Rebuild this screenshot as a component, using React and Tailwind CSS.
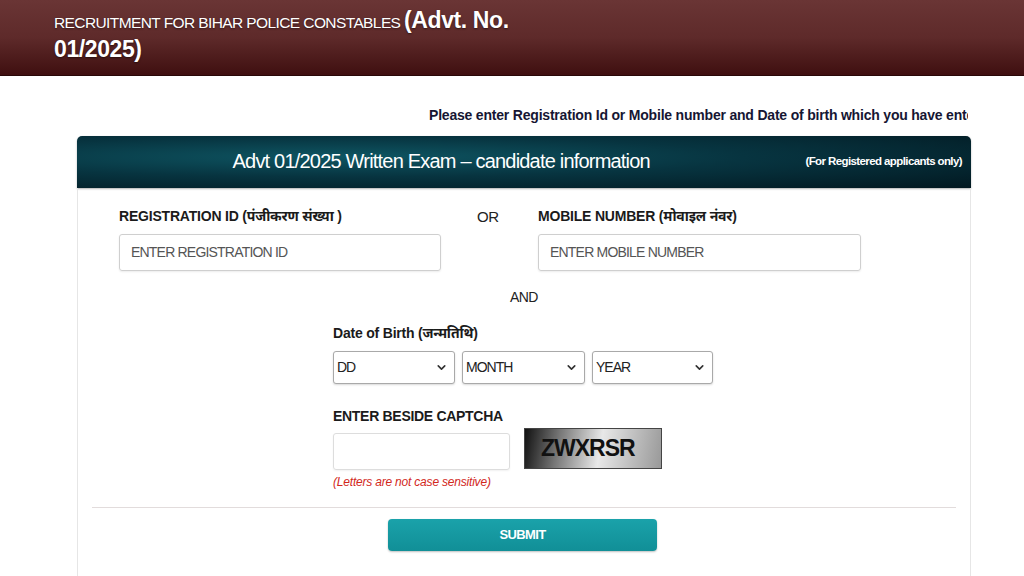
import { ChevronDown } from 'lucide-react'

const font = { fontFamily: '"Liberation Sans", Arial, "Noto Sans", sans-serif' }

function DateSelect({ label, width }) {
  return (
    <div className={`${width} h-[33px] flex items-center justify-between border border-[#a9a9a9] rounded-[3px] pl-[3px] pr-[6px] bg-white shadow-[0_1px_2px_rgba(0,0,0,0.15)]`}>
      <span className="text-[14px] text-[#222] tracking-[-1px]">{label}</span>
      <ChevronDown size={13} strokeWidth={3} className="text-[#333]" />
    </div>
  )
}

export default function App() {
  return (
    <div className="w-[1024px] h-[576px] overflow-hidden bg-white" style={font}>
      <header className="h-[76px] bg-gradient-to-b from-[#6a3535] via-[#5e2a2a] to-[#3f0f10] pl-[54px] pt-[7px] text-white border-b border-[#2a0808]">
        <div className="leading-[26px] [text-shadow:0_1px_2px_rgba(0,0,0,0.5)]">
          <span className="text-[15.5px] tracking-[-0.6px]">RECRUITMENT FOR BIHAR POLICE CONSTABLES </span>
          <span className="text-[23px] font-bold tracking-[-0.4px]">(Advt. No.</span>
          <br />
          <span className="text-[23px] font-bold tracking-[-0.4px]">01/2025)</span>
        </div>
      </header>

      <div className="w-[539px] ml-[429px] mt-[27px] overflow-hidden whitespace-nowrap">
        <span className="text-[14px] font-bold text-[#161633] tracking-[-0.2px]">
          Please enter Registration Id or Mobile number and Date of birth which you have entered during registration
        </span>
      </div>

      <div className="ml-[77px] mt-[9px] w-[894px]">
        <div className="h-[52px] rounded-t-[5px] bg-[radial-gradient(ellipse_at_30%_40%,#0e5562_0%,#073440_45%,#021820_100%)] flex items-center shadow-[0_1px_2px_rgba(0,0,0,0.3)]">
          <div className="flex-1 text-center text-white text-[20px] tracking-[-0.8px] pb-[3px] pl-[20px]">
            Advt 01/2025 Written Exam – candidate information
          </div>
          <div className="text-white text-[11.5px] font-bold tracking-[-0.6px] pr-[9px] pl-[20px]">
            (For Registered applicants only)
          </div>
        </div>

        <div className="border-x border-[#e6e6e6] h-[400px] px-[14px]">
          <div className="flex pt-[18px] pl-[27px]">
            <div className="w-[322px]">
              <div className="text-[14px] font-bold text-[#1b1b1b] tracking-[-0.2px] h-[20px]">
                REGISTRATION ID (पंजीकरण संख्या )
              </div>
              <div className="mt-[8px] h-[37px] border border-[#cfcfcf] rounded-[3px] flex items-center pl-[11px] text-[14px] text-[#555] tracking-[-0.8px] shadow-[0_1px_2px_rgba(0,0,0,0.08)]">
                ENTER REGISTRATION ID
              </div>
            </div>
            <div className="w-[97px] pl-[36px] text-[15px] text-[#222] tracking-[-0.5px]">OR</div>
            <div className="w-[323px]">
              <div className="text-[14px] font-bold text-[#1b1b1b] tracking-[-0.2px] h-[20px]">
                MOBILE NUMBER (मोवाइल नंवर)
              </div>
              <div className="mt-[8px] h-[37px] border border-[#cfcfcf] rounded-[3px] flex items-center pl-[11px] text-[14px] text-[#555] tracking-[-0.8px] shadow-[0_1px_2px_rgba(0,0,0,0.08)]">
                ENTER MOBILE NUMBER
              </div>
            </div>
          </div>

          <div className="text-center text-[14px] text-[#222] tracking-[-0.6px] mt-[16px]">AND</div>

          <div className="pl-[241px] mt-[15px]">
            <div className="text-[14px] font-bold text-[#1b1b1b] tracking-[-0.2px] h-[20px]">Date of Birth (जन्मतिथि)</div>
            <div className="flex gap-[7px] mt-[8px]">
              <DateSelect label="DD" width="w-[122px]" />
              <DateSelect label="MONTH" width="w-[123px]" />
              <DateSelect label="YEAR" width="w-[121px]" />
            </div>

            <div className="text-[14px] font-bold text-[#1b1b1b] tracking-[-0.3px] h-[20px] mt-[22px]">ENTER BESIDE CAPTCHA</div>
            <div className="flex mt-[-1px]">
              <div>
                <div className="mt-[8px] w-[177px] h-[37px] border border-[#ddd] rounded-[3px] shadow-[0_1px_2px_rgba(0,0,0,0.06)]" />
                <div className="mt-[3px] text-[12px] italic text-[#d2281c] tracking-[-0.2px]">(Letters are not case sensitive)</div>
              </div>
              <div className="ml-[14px] mt-[3px] w-[138px] h-[41px] border border-[#444] bg-[linear-gradient(100deg,#111_0%,#777_25%,#e8e8e8_55%,#bbb_80%,#999_100%)] flex items-center pl-[16px]">
                <span className="text-[23px] font-bold text-[#111] tracking-[-1px]">ZWXRSR</span>
              </div>
            </div>
          </div>

          <div className="mt-[16px] border-t border-[#e2dcdc]" />

          <div className="flex justify-center mt-[11px]">
            <button className="w-[269px] h-[32px] rounded-[4px] bg-gradient-to-b from-[#1aa2aa] to-[#118f97] text-white text-[13px] font-bold tracking-[-0.6px] shadow-[0_1px_2px_rgba(0,0,0,0.25)] ml-[-3px]">
              SUBMIT
            </button>
          </div>
        </div>
      </div>
    </div>
  )
}
